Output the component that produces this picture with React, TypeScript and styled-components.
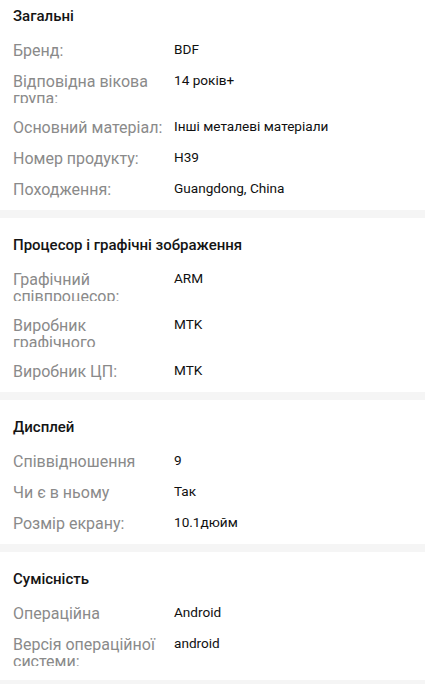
import React from "react";
import styled, { createGlobalStyle } from "styled-components";

const GlobalStyle = createGlobalStyle`
  html, body {
    margin: 0;
    padding: 0;
    background: #ffffff;
  }
  body {
    font-family: Roboto, "Noto Sans", "Liberation Sans", sans-serif;
    -webkit-font-smoothing: antialiased;
  }
`;

const Page = styled.div`
  display: flex;
  flex-direction: column;
  width: 425px;
  background: #ffffff;
`;

const Section = styled.section`
  display: flex;
  flex-direction: column;
  padding: 17px 0 5px;
  border-bottom: 8px solid #f5f5f5;
  &:first-child {
    padding-top: 6px;
  }
  &:last-child {
    border-bottom-width: 4px;
  }
`;

const Title = styled.h2`
  margin: 0 0 9px;
  padding: 0 13px;
  font-size: 15px;
  line-height: 20px;
  font-weight: 500;
  color: #141414;
`;

const Row = styled.div<{ $wrap?: boolean }>`
  display: grid;
  grid-template-columns: 161px 1fr;
  align-items: start;
  padding: 7px 13px ${(p) => (p.$wrap ? 9 : 7)}px;
`;

const Label = styled.div`
  font-size: 16px;
  line-height: 17px;
  max-height: 30px;
  overflow: hidden;
  color: #8a8a8a;
  padding-right: 5px;
`;

const Value = styled.div`
  font-size: 13.6px;
  line-height: 15px;
  color: #101010;
`;

type Item = { label: string; value: string; wrap?: boolean };

const groups: { title: string; items: Item[] }[] = [
  {
    title: "Загальні",
    items: [
      { label: "Бренд:", value: "BDF" },
      { label: "Відповідна вікова група:", value: "14 років+", wrap: true },
      { label: "Основний матеріал:", value: "Інші металеві матеріали" },
      { label: "Номер продукту:", value: "H39" },
      { label: "Походження:", value: "Guangdong, China" },
    ],
  },
  {
    title: "Процесор і графічні зображення",
    items: [
      { label: "Графічний співпроцесор:", value: "ARM", wrap: true },
      { label: "Виробник графічного", value: "MTK", wrap: true },
      { label: "Виробник ЦП:", value: "MTK" },
    ],
  },
  {
    title: "Дисплей",
    items: [
      { label: "Співвідношення", value: "9" },
      { label: "Чи є в ньому", value: "Так" },
      { label: "Розмір екрану:", value: "10.1дюйм" },
    ],
  },
  {
    title: "Сумісність",
    items: [
      { label: "Операційна", value: "Android" },
      { label: "Версія операційної системи:", value: "android", wrap: true },
    ],
  },
];

export default function App() {
  return (
    <>
      <GlobalStyle />
      <Page>
        {groups.map((g) => (
          <Section key={g.title}>
            <Title>{g.title}</Title>
            {g.items.map((it) => (
              <Row key={it.label} $wrap={it.wrap}>
                <Label>{it.label}</Label>
                <Value>{it.value}</Value>
              </Row>
            ))}
          </Section>
        ))}
      </Page>
    </>
  );
}
